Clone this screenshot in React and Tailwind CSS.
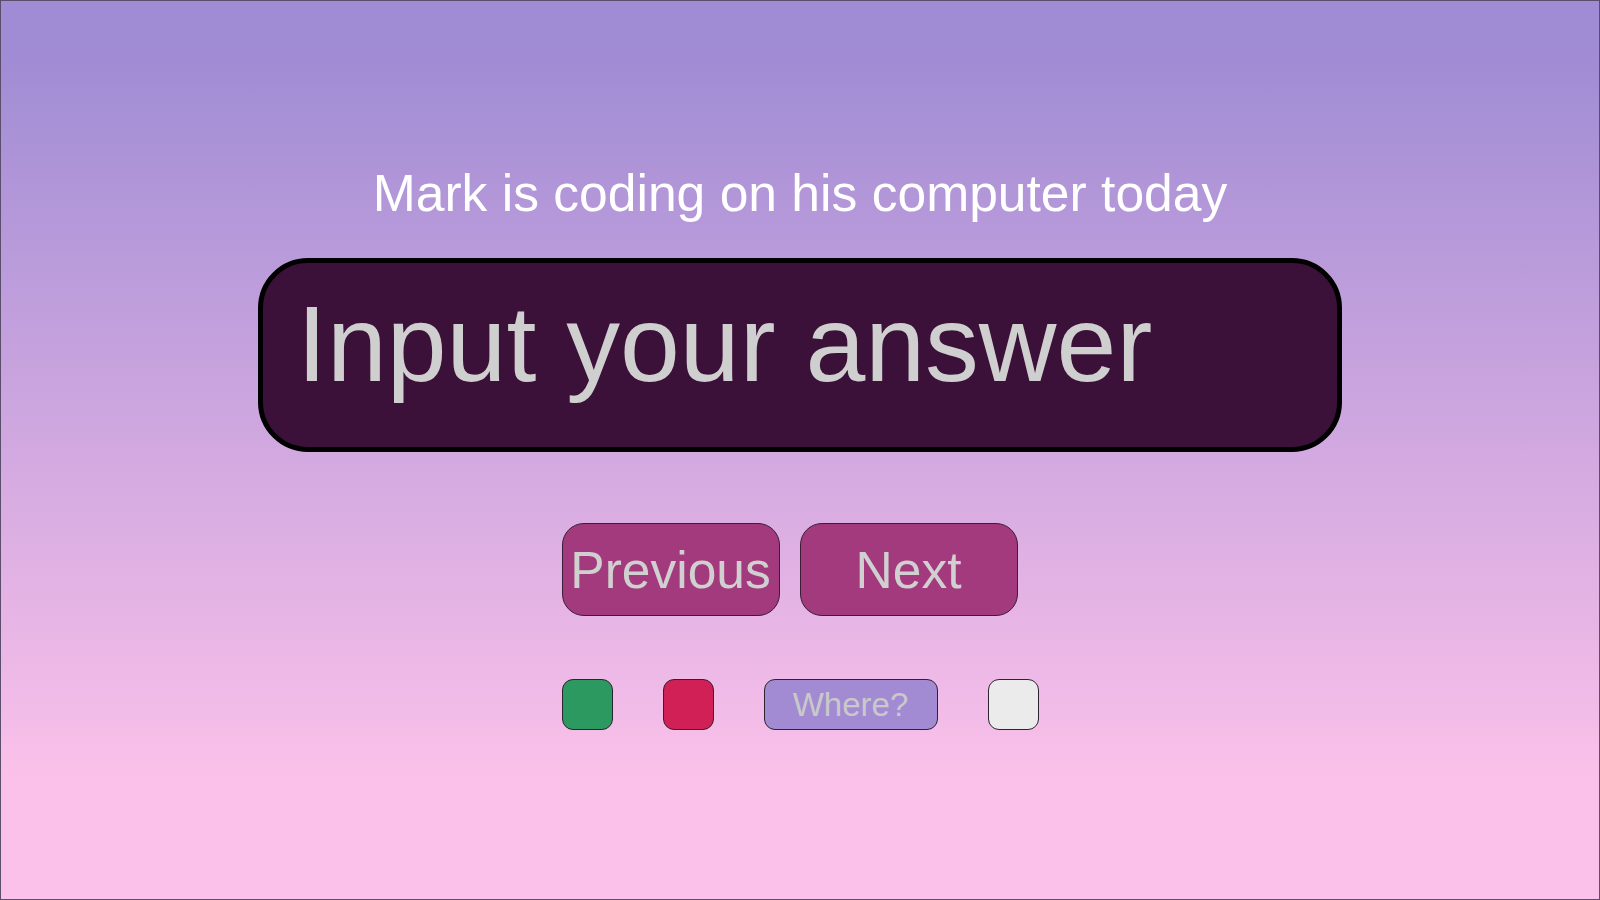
export default function App() {
  return (
    <div
      className="w-full h-[900px] border border-[#5a4e6c] bg-[linear-gradient(to_bottom,#a08cd4_6%,#fbc1ea_87%)] flex flex-col overflow-hidden"
      style={{ fontFamily: '"Liberation Sans", Arial, sans-serif' }}
    >
      <div className="mt-[167px] text-center text-[51.6px] leading-[51px] text-white">
        Mark is coding on his computer today
      </div>
      <div className="mt-[39px] mx-auto w-[1084px] h-[194px] shrink-0 border-[5px] border-black rounded-[50px] bg-[#3c1139] pl-[34px] pt-[28px]">
        <div className="text-[107.6px] leading-[107px] text-[#cfcfcf] whitespace-nowrap">
          Input your answer
        </div>
      </div>
      <div className="mt-[71px] mx-auto w-[477px] flex flex-col">
        <div className="flex gap-[20px]">
          <button className="w-[218px] h-[93px] rounded-[22px] border border-[#3a1d36] bg-[#a43a7e] text-[51.5px] leading-[52px] text-[#d0d0d0] flex items-center justify-center">
            Previous
          </button>
          <button className="w-[218px] h-[93px] rounded-[22px] border border-[#3a1d36] bg-[#a43a7e] text-[51.5px] leading-[52px] text-[#d0d0d0] flex items-center justify-center">
            Next
          </button>
        </div>
        <div className="mt-[63px] flex gap-[50px]">
          <div className="w-[51px] h-[51px] rounded-[11px] border border-[#2c2430] bg-[#2b9960]" />
          <div className="w-[51px] h-[51px] rounded-[11px] border border-[#2c2430] bg-[#d02055]" />
          <div className="w-[174px] h-[51px] rounded-[11px] border border-[#2c2430] bg-[#a28bd3] text-[33px] leading-[33px] text-[#c9c9c9] flex items-center justify-center">
            Where?
          </div>
          <div className="w-[51px] h-[51px] rounded-[11px] border border-[#2c2430] bg-[#ebebeb]" />
        </div>
      </div>
    </div>
  );
}
